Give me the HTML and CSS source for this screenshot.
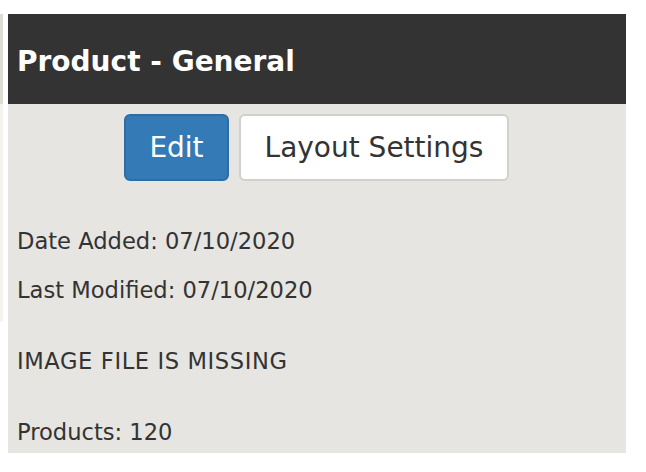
FILE: index.html
```html
<!DOCTYPE html>
<html>
<head>
<meta charset="utf-8">
<link rel="stylesheet" href="styles.css">
</head>
<body>
<div class="page">
  <div class="edge"></div>
  <div class="panel">
    <div class="panel-header">
      <h1 class="title">Product - General</h1>
    </div>
    <div class="panel-body">
      <div class="actions">
        <button class="btn btn-primary">Edit</button>
        <button class="btn btn-default">Layout Settings</button>
      </div>
      <p class="info first">Date Added: 07/10/2020</p>
      <p class="info">Last Modified: 07/10/2020</p>
      <p class="info spaced caps">IMAGE FILE IS MISSING</p>
      <p class="info spaced">Products: 120</p>
    </div>
  </div>
</div>
</body>
</html>
```

FILE: styles.css
```css
html, body {
  margin: 0;
  padding: 0;
  background: #ffffff;
}

.page {
  display: flex;
  align-items: flex-start;
  padding-top: 14px;
  width: 646px;
  height: 472px;
  box-sizing: border-box;
}

.edge {
  width: 3px;
  height: 308px;
  margin-right: 5px;
  background: linear-gradient(to bottom, #dcdcd5 0, #dcdcd5 90px, #f3f3f0 90px);
}

.panel {
  width: 618px;
  font-family: "DejaVu Sans", Verdana, sans-serif;
  color: #333333;
}

.panel-header {
  background: #333333;
  height: 90px;
  display: flex;
  align-items: center;
  padding: 5px 9px 0;
  box-sizing: border-box;
}

.title {
  margin: 0;
  font-size: 28px;
  font-weight: bold;
  color: #ffffff;
  line-height: 34px;
}

.panel-body {
  background: #e6e5e1;
  padding: 10px 10px 5px 9px;
}

.actions {
  display: flex;
  justify-content: center;
  gap: 10px;
}

.btn {
  font-family: "DejaVu Sans", Verdana, sans-serif;
  font-size: 28px;
  height: 67px;
  border-radius: 6px;
  border: 2px solid;
  margin: 0;
  line-height: 1;
  box-sizing: border-box;
}

.btn-primary {
  width: 105px;
  background: #337ab7;
  border-color: #2e6da4;
  color: #ffffff;
}

.btn-default {
  width: 270px;
  background: #ffffff;
  border-color: #d0d0cc;
  color: #333333;
}

.info {
  margin: 17px 0 0;
  font-size: 22.6px;
  line-height: 32px;
}

.info.first {
  margin-top: 44px;
}

.info.spaced {
  margin-top: 39px;
}

.info.caps {
  letter-spacing: 0.6px;
}
```
